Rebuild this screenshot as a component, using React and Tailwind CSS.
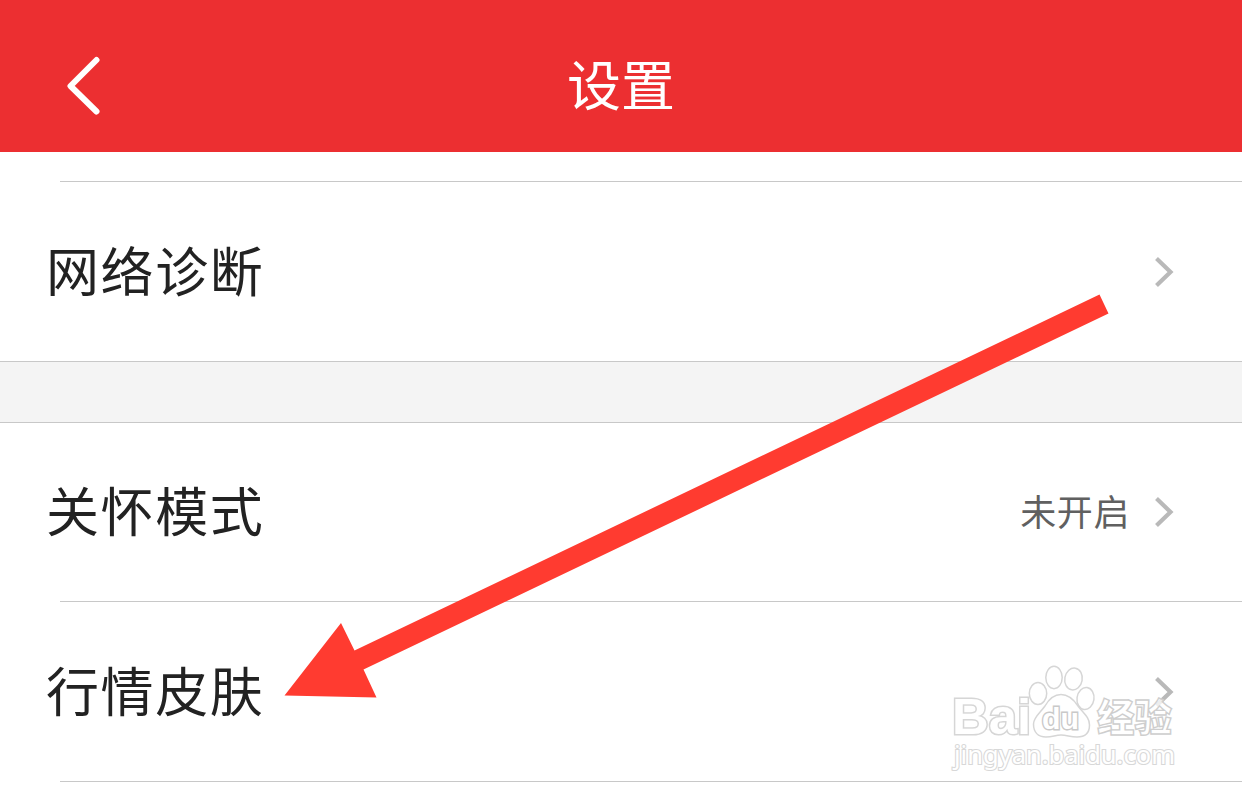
function BackIcon() {
  return (
    <svg width="36" height="60" viewBox="0 0 36 60" fill="none">
      <path
        d="M31.5 4 L5.5 30 L31.5 55.5"
        stroke="#fff"
        strokeWidth="6"
        strokeLinecap="round"
        strokeLinejoin="round"
      />
    </svg>
  )
}

function RowChevron() {
  return (
    <svg width="20" height="32" viewBox="0 0 20 32" fill="none">
      <path d="M2.5 2.5 L16.5 16 L2.5 29.5" stroke="#b9b9b9" strokeWidth="4.2" />
    </svg>
  )
}

function SettingRow({ label, value }) {
  return (
    <div className="flex h-[179px] items-center justify-between pr-[68px] pl-[46px]">
      <span className="pb-[4px] text-[53px] leading-none tracking-[1.6px] text-[#222]">{label}</span>
      <div className="flex items-center gap-[24px]">
        {value && (
          <span className="pb-[4px] text-[36px] leading-none tracking-[0.6px] text-[#606060]">{value}</span>
        )}
        <RowChevron />
      </div>
    </div>
  )
}

function Watermark() {
  return (
    <svg
      className="absolute top-[660px] left-[945px]"
      width="240"
      height="120"
      viewBox="0 0 240 120"
      fill="#fff"
      fillOpacity="0.75"
      stroke="#d6d6d6"
      strokeWidth="1.5"
    >
      <ellipse cx="93" cy="33.5" rx="8.7" ry="11" />
      <ellipse cx="109" cy="17.5" rx="8.2" ry="11.2" />
      <ellipse cx="128.5" cy="19" rx="8.7" ry="11" transform="rotate(10 128.5 19)" />
      <ellipse cx="140.5" cy="38.5" rx="8.5" ry="11" transform="rotate(8 140.5 38.5)" />
      <path d="M116 34.5 C124 34.5 129 40 133 46 C138 53 144.5 57 144.5 65 C144.5 73 140 77 132 77 C125 77 122 75 116 75 C110 75 108 77 101 77 C93 77 88.5 72 88.5 64 C88.5 57 95 53 100 46 C104 39 109 34.5 116 34.5 Z" />
      <g className="font-['Liberation_Sans',sans-serif] font-bold">
        <text
          x="7"
          y="74"
          fontSize="50"
          fillOpacity="1"
          strokeWidth="3"
          paintOrder="stroke"
          textLength="79"
          lengthAdjust="spacingAndGlyphs"
        >
          Bai
        </text>
        <text
          x="97"
          y="69"
          fontSize="30"
          fillOpacity="1"
          stroke="#c9c9c9"
          strokeWidth="2.8"
          paintOrder="stroke"
          textLength="37"
          lengthAdjust="spacingAndGlyphs"
        >
          du
        </text>
      </g>
      <text
        x="152"
        y="71"
        fontSize="38"
        fillOpacity="0.75"
        strokeWidth="1.4"
        stroke="#cecece"
        textLength="75"
        lengthAdjust="spacingAndGlyphs"
        className="font-['Noto_Sans_CJK_SC',sans-serif] font-black"
      >
        经验
      </text>
      <text
        x="9"
        y="104"
        fontSize="25"
        fillOpacity="1"
        stroke="#d8d8d8"
        strokeWidth="2.2"
        paintOrder="stroke"
        textLength="221"
        lengthAdjust="spacingAndGlyphs"
        className="font-['Noto_Sans',sans-serif]"
      >
        jingyan.baidu.com
      </text>
    </svg>
  )
}

export default function App() {
  return (
    <div className="relative h-[799px] w-[1242px] overflow-hidden bg-white font-['Noto_Sans_CJK_SC',sans-serif]">
      {/* Header */}
      <header className="grid h-[152px] grid-cols-[1fr_auto_1fr] items-center bg-[#ec2f31] px-[65px] pt-[20px]">
        <BackIcon />
        <h1 className="pb-[7px] text-[54px] leading-none text-white">设置</h1>
      </header>

      {/* Settings list */}
      <main>
        <div className="mt-[29px] ml-[60px] h-px bg-[#c8c8c8]" />
        <SettingRow label="网络诊断" />
        <div className="h-[62px] border-y border-[#c8c8c8] bg-[#f4f4f4]" />
        <div className="-mt-px">
          <SettingRow label="关怀模式" value="未开启" />
        </div>
        <div className="ml-[60px] h-px bg-[#c8c8c8]" />
        <SettingRow label="行情皮肤" />
        <div className="ml-[60px] h-px bg-[#c8c8c8]" />
      </main>

      <Watermark />

      {/* Pointer to the skin setting */}
      <svg className="absolute inset-0" width="1242" height="799" viewBox="0 0 1242 799">
        <path
          d="M284.5 695.5 L341 623 L354.5 650.5 L1099.5 294.5 L1108.5 313.5 L363.5 669.5 L376.5 697.5 Z"
          fill="#ff3b30"
        />
      </svg>
    </div>
  )
}
